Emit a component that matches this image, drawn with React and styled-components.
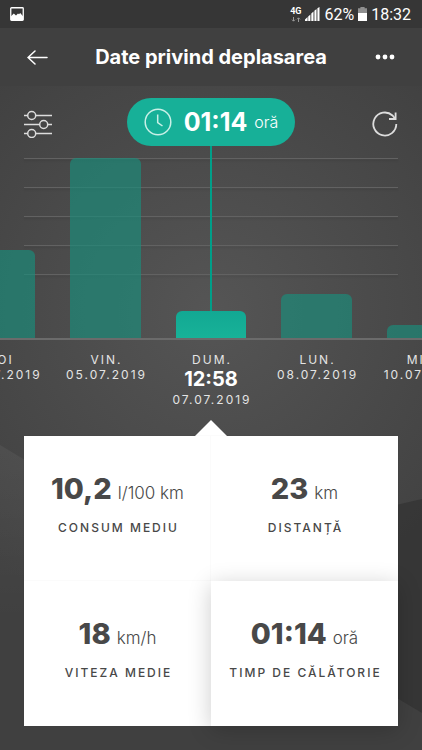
import React from "react";
import styled, {createGlobalStyle} from "styled-components";

const trips = [
    {day: "JOI", date: "04.07.2019", height: 88},
    {day: "VIN.", date: "05.07.2019", height: 180},
    {day: "DUM.", time: "12:58", date: "07.07.2019", height: 27, active: true},
    {day: "LUN.", date: "08.07.2019", height: 44},
    {day: "MIE.", date: "10.07.2019", height: 13},
];

const stats = [
    {value: "10,2", unit: "l/100 km", label: "Consum mediu"},
    {value: "23", unit: "km", label: "Distanță"},
    {value: "18", unit: "km/h", label: "Viteza medie"},
    {value: "01:14", unit: "oră", label: "Timp de călătorie", active: true},
];

function StatusBar() {
    return (
        <Status>
            <svg width="14" height="14" viewBox="0 0 14 14">
                <rect x="0.75" y="0.75" width="12.5" height="12.5" rx="0.8" fill="none" stroke="#fff" strokeWidth="1.3"/>
                <path d="M1 9.2 3.8 6.4 6 8.6 8 6.6 9 7.3 10.2 6 13 9.2V13H1z" fill="#fff"/>
            </svg>
            <StatusGroup>
                <Network>
                    4G
                    <svg width="10" height="5" viewBox="0 0 10 5" fill="none" stroke="#999">
                        <path d="M2.5 0v4M1 2.7 2.5 4.2 4 2.7M7.5 5V1M6 2.3 7.5 0.8 9 2.3"/>
                    </svg>
                </Network>
                <svg width="15" height="14" viewBox="0 0 15 14" fill="#fff">
                    <path d="M0 14v-1.6L2.6 10v4zM3.2 14V9.4l2.200-1.900V14zM6.300 14V6.600l2.200-2V14zM9.400 14V3.800l2.100-1.800V14zM12.400 14V1.200l2.100-1.200v14z"/>
                </svg>
                <span>62%</span>
                <svg width="9" height="14" viewBox="0 0 9 14">
                    <path d="M2.4 0h4.2v1.3H9V6H0V1.3h2.4z" fill="#8f8f8f"/>
                    <path d="M0 6h9v8H0z" fill="#fff"/>
                </svg>
                <span>18:32</span>
            </StatusGroup>
        </Status>
    );
}

function Header() {
    return (
        <TitleBar>
            <IconButton aria-label="Înapoi">
                <svg width="21" height="15" viewBox="0 0 21 15" fill="none" stroke="#fff" strokeWidth="1.5" strokeLinecap="round">
                    <path d="M1 7.5h19M8 1 1 7.5 8 14"/>
                </svg>
            </IconButton>
            <Title>Date privind deplasarea</Title>
            <IconButton aria-label="Mai multe" $end>
                <svg width="20" height="6" viewBox="0 0 20 6" fill="#fff">
                    <circle cx="3" cy="3" r="2.4"/>
                    <circle cx="10" cy="3" r="2.4"/>
                    <circle cx="17" cy="3" r="2.4"/>
                </svg>
            </IconButton>
        </TitleBar>
    );
}

function App() {
    return (
        <Page>
            <GlobalStyle/>
            <StatusBar/>
            <Header/>
            <Content>
                <Backdrop viewBox="0 0 422 664" preserveAspectRatio="none" aria-hidden="true">
                    <defs>
                        <linearGradient id="leftFacet" x1="0" y1="0" x2="0" y2="1">
                            <stop offset="0" stopColor="#fff" stopOpacity="0.05"/>
                            <stop offset="1" stopColor="#fff" stopOpacity="0"/>
                        </linearGradient>
                    </defs>
                    <path d="M0 359 60 395V530L0 535z" fill="url(#leftFacet)"/>
                    <path d="M422 413 340 432V578L422 627z" fill="#333" fillOpacity="0.75"/>
                </Backdrop>
                <Toolbar>
                    <IconButton aria-label="Filtre">
                        <svg width="28" height="28" viewBox="0 0 28 28" fill="none" stroke="#ddd" strokeWidth="1.5">
                            <path d="M0 5.5h3.7M11.7 5.5H28M0 14.5h15.7M23.7 14.5H28M0 23.5h3.7M11.7 23.5H28"/>
                            <circle cx="7.7" cy="5.5" r="4"/>
                            <circle cx="19.7" cy="14.5" r="4"/>
                            <circle cx="7.7" cy="23.5" r="4"/>
                        </svg>
                    </IconButton>
                    <Pill>
                        <svg width="28" height="28" viewBox="0 0 28 28" fill="none" stroke="#c9f0e7" strokeWidth="1.5">
                            <circle cx="14" cy="14" r="12.8"/>
                            <path d="M13.7 6.5v8l4.8 3.5"/>
                        </svg>
                        <PillValue>01:14</PillValue>
                        <PillUnit>oră</PillUnit>
                    </Pill>
                    <IconButton aria-label="Reîncarcă" $end>
                        <svg width="26" height="26" viewBox="0 0 26 26" fill="none" stroke="#ddd" strokeWidth="1.8">
                            <path d="M24.3 13A11.5 11.5 0 1 1 20.5 4.5L23 7.5"/>
                            <path d="M23.6 1.500V8H17"/>
                        </svg>
                    </IconButton>
                </Toolbar>
                <Chart>
                    <GridLines>
                        <i/><i/><i/><i/><i/>
                    </GridLines>
                    <Bars>
                        {trips.map((trip) => (
                            <Bar key={trip.date} $active={trip.active} style={{height: trip.height}}/>
                        ))}
                    </Bars>
                    <Marker/>
                </Chart>
                <Days>
                    {trips.map((trip) => (
                        <Day key={trip.date}>
                            <DayText>{trip.day}</DayText>
                            {trip.time && <Time>{trip.time}</Time>}
                            <DayText>{trip.date}</DayText>
                        </Day>
                    ))}
                </Days>
                <Pointer/>
                <Card>
                    {stats.map((stat) => (
                        <Stat key={stat.label} $active={stat.active}>
                            <Amount>
                                <Value>{stat.value}</Value>
                                <Unit>{stat.unit}</Unit>
                            </Amount>
                            <Label>{stat.label}</Label>
                        </Stat>
                    ))}
                </Card>
            </Content>
        </Page>
    );
}

export default App;

const GlobalStyle = createGlobalStyle`
  * {
    box-sizing: border-box;
  }

  body {
    margin: 0;
    background: #3f3f3f;
    font-family: Inter, "Liberation Sans", sans-serif;
  }
`;

const Page = styled.div`
  display: flex;
  flex-direction: column;
  min-height: 100vh;
  overflow: hidden;
  color: #fff;
`;

const Status = styled.div`
  display: flex;
  align-items: center;
  justify-content: space-between;
  height: 28px;
  padding: 0 11px 0 10px;
  background: #363636;
  font-family: Roboto, sans-serif;
  font-size: 16px;
`;

const StatusGroup = styled.div`
  display: flex;
  align-items: center;
  gap: 4px;
`;

const Network = styled.div`
  display: flex;
  flex-direction: column;
  align-items: center;
  gap: 1px;
  font-size: 9px;
  font-weight: 700;
  line-height: 9px;
`;

const TitleBar = styled.header`
  display: flex;
  align-items: center;
  justify-content: space-between;
  height: 58px;
  padding: 0 27px;
  background: #404040;
`;

const Title = styled.h1`
  margin: 0;
  font-size: 20px;
  font-weight: 700;
`;

const IconButton = styled.button`
  display: flex;
  justify-content: ${(props) => (props.$end ? "flex-end" : "flex-start")};
  width: 28px;
  padding: 0;
  border: 0;
  background: none;
  cursor: pointer;
`;

const Content = styled.main`
  position: relative;
  flex: 1;
  padding-bottom: 24px;
  background: radial-gradient(ellipse 330px 330px at 50% 225px, #555 0%, #404040 100%);
`;

const Backdrop = styled.svg`
  position: absolute;
  inset: 0;
  width: 100%;
  height: 100%;
`;

const Toolbar = styled.div`
  position: relative;
  display: flex;
  align-items: center;
  justify-content: space-between;
  padding: 12px 24px 0;

  ${IconButton} {
    padding-top: 3px;
  }
`;

const Pill = styled.div`
  display: flex;
  align-items: center;
  justify-content: center;
  width: 168px;
  height: 48px;
  border-radius: 24px;
  background: #17b098;
`;

const PillValue = styled.span`
  margin: 0 7px 0 12px;
  font-size: 25px;
  font-weight: 700;
`;

const PillUnit = styled.span`
  font-size: 16px;
  font-weight: 300;
`;

const Chart = styled.div`
  position: relative;
  display: grid;
  height: 194px;
  border-bottom: 2px solid #6b6b6b;
  overflow: hidden;
`;

const GridLines = styled.div`
  grid-area: 1 / 1;
  display: flex;
  flex-direction: column;
  gap: 28px;
  margin: 12px 24px 0;

  i {
    height: 1px;
    background: #626262;
    box-shadow: 0 2px 2px rgba(0, 0, 0, 0.1);
  }
`;

const Bars = styled.div`
  grid-area: 1 / 1;
  display: grid;
  grid-template-columns: repeat(5, 1fr);
  align-items: end;
  justify-items: center;
  margin: 0 -12.5%;
`;

const Bar = styled.div`
  width: 67%;
  border-radius: 6px 6px 0 0;
  background: ${(props) => (props.$active ? "linear-gradient(#12a893, #18b298)" : "rgba(24, 143, 124, 0.65)")};
`;

const Marker = styled.div`
  position: absolute;
  top: 0;
  bottom: 27px;
  left: calc(50% - 1px);
  width: 2px;
  background: #009f89;
`;

const Days = styled.div`
  position: relative;
  display: grid;
  grid-template-columns: repeat(5, 1fr);
  margin: 0 -12.5%;
  padding-top: 12px;
`;

const Day = styled.div`
  display: flex;
  flex-direction: column;
  align-items: center;
  color: #e4e4e4;
`;

/* left padding balances the spacing after the last letter */
const DayText = styled.span`
  padding-left: 2px;
  font-size: 12px;
  line-height: 15px;
  letter-spacing: 2px;
`;

const Time = styled.strong`
  color: #fff;
  font-size: 20px;
  font-weight: 700;
  line-height: 25px;
`;

const Pointer = styled.div`
  position: relative;
  width: 32px;
  height: 16px;
  margin: 13px auto 0;
  background: #fff;
  clip-path: polygon(50% 0, 100% 100%, 0 100%);
`;

const Card = styled.section`
  position: relative;
  display: grid;
  grid-template-columns: 1fr 1fr;
  margin: 0 24px;
  background: #fff;
  color: #484848;
`;

const Stat = styled.div`
  display: flex;
  flex-direction: column;
  align-items: center;
  height: 145px;
  padding-top: 35px;
  background: #fff;
  box-shadow: ${(props) => (props.$active ? "0 4px 22px rgba(0, 0, 0, 0.2)" : "0 0 1px rgba(0, 0, 0, 0.1)")};
  z-index: ${(props) => (props.$active ? 1 : 0)};
`;

const Amount = styled.div`
  display: flex;
  align-items: baseline;
  gap: 6px;
  line-height: 36px;
`;

const Value = styled.strong`
  font-size: 29px;
  font-weight: 800;
`;

const Unit = styled.span`
  font-size: 17px;
  font-weight: 300;
`;

const Label = styled.div`
  margin-top: 9px;
  padding-left: 2px;
  font-size: 12px;
  font-weight: 500;
  line-height: 16px;
  letter-spacing: 2px;
  text-transform: uppercase;
`;
